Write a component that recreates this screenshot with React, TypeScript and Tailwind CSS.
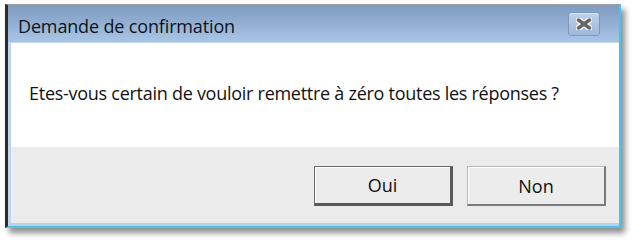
import React from "react";

function CloseGlyph() {
  return (
    <svg width="16" height="12" viewBox="0 0 16 12">
      <path d="M2.5 2 L13.5 10 M13.5 2 L2.5 10" stroke="#ffffff" strokeWidth="6" strokeLinecap="round" />
      <path d="M2.5 2 L13.5 10 M13.5 2 L2.5 10" stroke="#666666" strokeWidth="3.5" strokeLinecap="round" />
    </svg>
  );
}

export default function App() {
  const font = { fontFamily: '"Open Sans", "Noto Sans", sans-serif' };
  return (
    <div className="w-[636px] h-[242px] bg-white overflow-hidden pl-[5px] pt-[4px]" style={font}>
      <div className="w-[616px] h-[224px] flex flex-col border-l-[3px] border-l-[#2b2b2b] border-t border-t-[#a0a0a0] border-r-2 border-r-[#4cc3e3] border-b-2 border-b-[#4cc3e3] shadow-[4px_5px_6px_rgba(0,0,0,0.45)]">
        <div className="h-[38px] flex items-center justify-between bg-gradient-to-b from-[#7d9bc0] to-[#a9c5e6] pl-[10px] pr-[19px] border-b border-b-[#c5d8ee]">
          <span className="text-[18px] text-[#10121a] tracking-[-0.15px] mt-[5px]">Demande de confirmation</span>
          <div className="w-[32px] h-[24px] mt-[1px] rounded-[3px] border border-[#7d98bb] bg-gradient-to-b from-[#bfd3ea] to-[#9db8da] flex items-center justify-center shadow-[inset_0_1px_0_rgba(255,255,255,0.5)]">
            <CloseGlyph />
          </div>
        </div>
        <div className="flex-1 flex flex-col border-l-[3px] border-l-[#c0d6ee] border-b-[3px] border-b-[#b8d2ee]">
          <div className="h-[104px] bg-white flex items-center pl-[18px] pb-[3px]">
            <span className="text-[18px] text-[#111] tracking-[-0.27px]">
              Etes-vous certain de vouloir remettre à zéro toutes les réponses ?
            </span>
          </div>
          <div className="flex-1 bg-[#ebebeb] flex justify-end items-start pt-[19px] pr-[13px] gap-[14px]">
            <button className="w-[139px] h-[40px] bg-[#ececec] border border-[#6a6a6a] border-r-[3px] border-b-[3px] border-r-[#5a5a5a] border-b-[#5a5a5a] shadow-[inset_1px_1px_0_#ffffff] text-[18px] text-[#111] pt-[1px]">
              Oui
            </button>
            <button className="w-[139px] h-[40px] bg-[#ececec] border border-[#b4b4b4] border-r-2 border-b-2 border-r-[#7a7a7a] border-b-[#7a7a7a] shadow-[inset_1px_1px_0_#ffffff] text-[18px] text-[#111] pt-[1px]">
              Non
            </button>
          </div>
        </div>
      </div>
    </div>
  );
}
